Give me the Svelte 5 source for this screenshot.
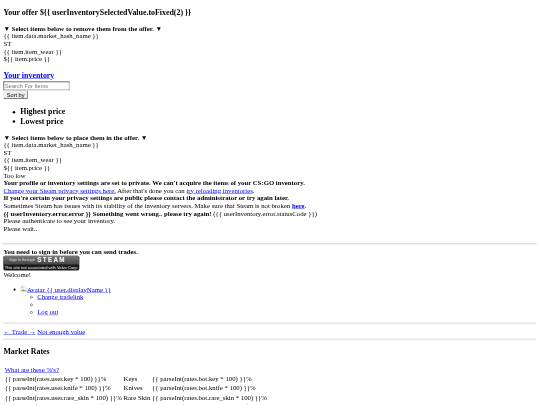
<script>
  const sortOptions = ["Highest price", "Lowest price"];
  const rates = [
    { label: "Keys", user: "rates.user.key", bot: "rates.bot.key" },
    { label: "Knives", user: "rates.user.knife", bot: "rates.bot.knife" },
    { label: "Rare Skin", user: "rates.user.rare_skin", bot: "rates.bot.rare_skin" },
    { label: "Weapons", user: "rates.user.weapon", bot: "rates.bot.weapon" },
  ];
  const mustache = (s) => "{{ " + s + " }}";
</script>

<div class="page">
  <h3>Your offer ${mustache("userInventorySelectedValue.toFixed(2)")}</h3>

  <div class="hint">▼ Select items below to remove them from the offer. ▼</div>
  <div>{mustache("item.data.market_hash_name")}</div>
  <div>ST</div>
  <div>{mustache("item.item_wear")}</div>
  <div>${mustache("item.price")}</div>

  <h3 class="inv"><a href="#inv">Your inventory</a></h3>
  <input type="text" placeholder="Search For Items" />
  <div><button>Sort by</button></div>
  <ul class="sort">
    {#each sortOptions as opt}
      <li>{opt}</li>
    {/each}
  </ul>

  <div class="hint">▼ Select items below to place them in the offer. ▼</div>
  <div>{mustache("item.data.market_hash_name")}</div>
  <div>ST</div>
  <div>{mustache("item.item_wear")}</div>
  <div>${mustache("item.price")}</div>
  <div>Too low</div>
  <div class="hint">Your profile or inventory settings are set to private. We can't acquire the items of your CS:GO inventory.</div>
  <div><a href="#privacy">Change your Steam privacy settings here.</a> After that's done you can <a href="#reload">try reloading inventories</a>.</div>
  <div class="hint">If you're certain your privacy settings are public please contact the administrator or try again later.</div>
  <div>Sometimes Steam has issues with its stability of the inventory servers. Make sure that Steam is not broken <a href="#status"><b>here</b></a>.</div>
  <div><b>{mustache("userInventory.error.error")} Something went wrong.. please try again!</b> ({mustache("userInventory.error.statusCode")})</div>
  <div>Please authenticate to see your inventory.</div>
  <div>Please wait..</div>

  <hr class="gap" />
  <div class="hint">You need to sign in before you can send trades.</div>
  <a class="steam" href="#login">
    <span class="steam-top"><span class="through">Sign in through</span><span class="word">STEAM</span></span>
    <span class="steam-note">This site not associated with Valve Corp.</span>
  </a>
  <div>Welcome!</div>
  <ul class="user">
    <li>
      <a href="#user"><svg class="broken" viewBox="0 0 16 16" aria-label="Avatar"><path d="M1.5 1.5h9l4 4v9h-13z" fill="#fff" stroke="#9aa0a6"/><path d="M2.5 13l4-5 3 3 2-2 2 4z" fill="#6fae5f"/><path d="M3 3h5v3H3z" fill="#b9d3f5"/></svg>Avatar {mustache("user.displayName")}</a>
      <ul>
        <li><a href="#tradelink">Change tradelink</a></li>
        <li></li>
        <li><a href="#logout">Log out</a></li>
      </ul>
    </li>
  </ul>
  <hr />
  <div class="nav"><a href="#trade">← Trade →</a> <a href="#value">Not enough value</a></div>
  <hr />
  <h3>Market Rates</h3>
  <table>
    <tbody>
      <tr><td colspan="3"><a href="#rates">What are these %'s?</a></td></tr>
      {#each rates as r}
        <tr>
          <td>{mustache("parseInt(" + r.user + " * 100)")}%</td>
          <td>{r.label}</td>
          <td>{mustache("parseInt(" + r.bot + " * 100)")}%</td>
        </tr>
      {/each}
    </tbody>
  </table>
</div>

<style>
  :global(html), :global(body) {
    margin: 0;
    overflow: hidden;
    background: #fff;
  }
  :global(body) {
    height: 405px;
  }
  .page {
    transform: scale(0.421875);
    transform-origin: 0 0;
    filter: blur(0.6px);
    width: 1280px;
    box-sizing: border-box;
    padding: 0 8px;
    display: flow-root;
    font-family: "Liberation Serif", "Times New Roman", serif;
    font-size: 16px;
    color: #000;
  }
  a {
    color: #0000ee;
    text-decoration: underline;
  }
  h3 {
    font-size: 18.72px;
    margin: 18.72px 0;
  }
  h3.inv {
    margin-bottom: 3px;
  }
  .hint {
    font-weight: bold;
  }
  input {
    display: block;
    font-family: "Liberation Sans", Arial, sans-serif;
    font-size: 13.33px;
    width: 149px;
    padding: 1px 2px;
    border: 2px inset #a8a8a8;
    box-sizing: content-box;
  }
  button {
    font-family: "Liberation Sans", Arial, sans-serif;
    font-size: 13.33px;
    padding: 1px 6px;
    border: 2px outset #a8a8a8;
    background: #efefef;
    border-radius: 3px;
  }
  ul {
    margin: 16px 0;
    padding-left: 40px;
  }
  ul ul {
    margin: 0;
  }
  ul.sort {
    margin: 18.72px 0;
  }
  .sort li {
    font-size: 18.72px;
    font-weight: bold;
  }
  hr {
    border: 1px solid #c8c8c8;
    margin: 8px 0;
  }
  hr.gap {
    margin: 26px 0 9px;
  }
  .nav {
    margin-top: 10px;
  }
  .steam {
    display: flex;
    flex-direction: column;
    width: 180px;
    height: 35px;
    margin-bottom: 2px;
    border-radius: 4px;
    overflow: hidden;
    background: #1a1a1a;
    color: #fff;
    text-decoration: none;
    font-family: "Liberation Sans", Arial, sans-serif;
  }
  .steam-top {
    display: flex;
    align-items: center;
    gap: 6px;
    height: 21px;
    padding-left: 14px;
    background: linear-gradient(#7a7a7a, #454545);
  }
  .through {
    font-size: 9px;
    color: #ddd;
  }
  .word {
    font-size: 15px;
    font-weight: bold;
    letter-spacing: 3px;
  }
  .steam-note {
    font-size: 9.7px;
    line-height: 14px;
    text-align: center;
    color: #eee;
  }
  .broken {
    width: 16px;
    height: 16px;
    vertical-align: -2px;
  }
  table {
    border-spacing: 2px;
    margin-top: 2px;
  }
  td {
    padding: 1px;
  }
</style>
